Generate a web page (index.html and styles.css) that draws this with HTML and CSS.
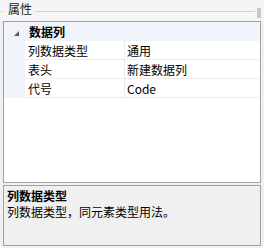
FILE: index.html
```html
<!DOCTYPE html>
<html>
<head>
<meta charset="utf-8">
<link rel="stylesheet" href="styles.css">
</head>
<body>
<div class="panel">
  <div class="title">
    <span class="rule short"></span>
    <span class="title-text">属性</span>
    <span class="rule long"></span>
    <span class="grip"></span>
  </div>
  <div class="grid">
    <div class="cat">
      <span class="indent"><svg class="tri" width="5" height="5" viewBox="0 0 5 5"><polygon points="5,0 5,5 0,5" fill="#595959"/></svg></span>
      <span class="cat-name">数据列</span>
    </div>
    <div class="row">
      <span class="indent"></span>
      <span class="name">列数据类型</span>
      <span class="value">通用</span>
    </div>
    <div class="row">
      <span class="indent"></span>
      <span class="name">表头</span>
      <span class="value">新建数据列</span>
    </div>
    <div class="row">
      <span class="indent"></span>
      <span class="name">代号</span>
      <span class="value">Code</span>
    </div>
  </div>
  <div class="desc">
    <div class="desc-title">列数据类型</div>
    <div class="desc-text">列数据类型，同元素类型用法。</div>
  </div>
</div>
</body>
</html>
```

FILE: styles.css
```css
html, body {
  margin: 0;
  padding: 0;
  background: #f0f0f0;
}
body {
  width: 264px;
  height: 248px;
  overflow: hidden;
  font-family: "Noto Sans CJK SC", "Noto Sans", sans-serif;
  font-size: 12px;
  color: #000;
}
.panel {
  padding: 0 3px;
}
.title {
  height: 21px;
  display: flex;
  align-items: flex-start;
  background: #f5f5f5;
  margin: 0 -3px;
}
.title-text {
  line-height: 16px;
  margin-top: 1px;
  padding: 0 3px;
  color: #1e1e1e;
}
.rule {
  height: 1px;
  margin-top: 11px;
  background: #d2d2d2;
}
.rule.short {
  width: 5px;
  background: #e4e4e4;
}
.rule.long {
  flex: 1;
}
.grip {
  width: 4px;
  height: 10px;
  margin: 8px 3px 0 2px;
  background-image: radial-gradient(circle, #c8c8c8 0.8px, transparent 1px);
  background-size: 2px 2px;
}
.grid {
  height: 160px;
  border: 1px solid #a0a0a0;
  background: #fff;
}
.cat, .row {
  display: flex;
  height: 19px;
  line-height: 19px;
}
.cat {
  background: #f0f4fa;
  font-weight: bold;
}
.indent {
  width: 21px;
  flex: none;
  background: #f0f4fa;
  position: relative;
}
.tri {
  position: absolute;
  left: 10px;
  top: 9px;
}
.cat-name {
  padding-left: 4px;
}
.name {
  flex: none;
  padding-left: 3px;
  border-right: 1px solid #ececec;
  border-bottom: 1px solid #ececec;
  box-sizing: border-box;
  width: 100px;
}
.value {
  flex: 1;
  padding-left: 2px;
  border-bottom: 1px solid #ececec;
  box-sizing: border-box;
}
.desc {
  margin-top: 2px;
  height: 57px;
  border: 1px solid #a0a0a0;
  background: #f0f0f0;
  padding: 2px 3px 0;
  line-height: 16px;
}
.desc-title {
  font-weight: bold;
}
```
